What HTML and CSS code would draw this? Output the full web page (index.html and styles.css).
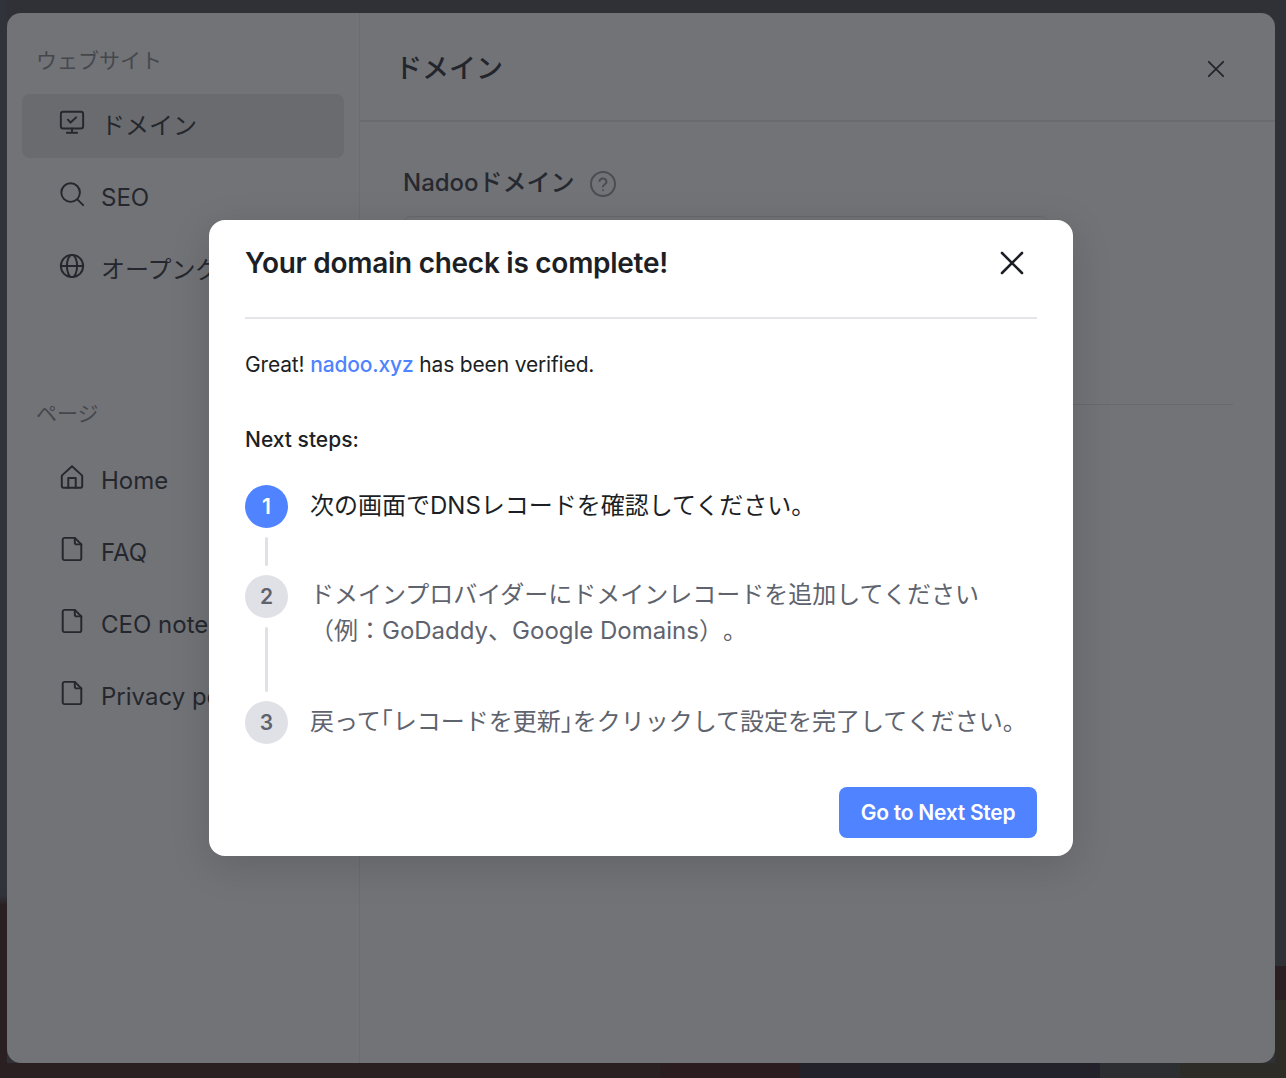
FILE: index.html
```html
<!DOCTYPE html>
<html lang="ja">
<head>
<meta charset="utf-8">
<title>Domain</title>
<link rel="stylesheet" href="styles.css">
</head>
<body>
<div class="stage">
  <div class="panel">
    <aside class="sidebar">
      <div class="group-label">ウェブサイト</div>
      <a class="nav-item active">
        <svg class="nav-icon" viewBox="0 0 28 28" fill="none" stroke="currentColor" stroke-width="2.100" stroke-linecap="round" stroke-linejoin="round"><rect x="2" y="3" width="24" height="18" rx="2.5"/><path d="M9.500 11.500l3 3 6-5.500"/><path d="M14 21v4.500M8.500 25.500h11"/></svg>
        <span>ドメイン</span>
      </a>
      <a class="nav-item">
        <svg class="nav-icon" viewBox="0 0 28 28" fill="none" stroke="currentColor" stroke-width="2.100" stroke-linecap="round" stroke-linejoin="round"><circle cx="12.500" cy="12.500" r="10"/><path d="M20 20l6 6"/></svg>
        <span>SEO</span>
      </a>
      <a class="nav-item">
        <svg class="nav-icon" viewBox="0 0 28 28" fill="none" stroke="currentColor" stroke-width="2.100" stroke-linecap="round" stroke-linejoin="round"><circle cx="14" cy="14" r="12"/><path d="M2 14h24"/><ellipse cx="14" cy="14" rx="5.500" ry="12"/></svg>
        <span>オープングラフ</span>
      </a>
      <div class="group-label second">ページ</div>
      <a class="nav-item">
        <svg class="nav-icon" viewBox="0 0 28 28" fill="none" stroke="currentColor" stroke-width="2.100" stroke-linecap="round" stroke-linejoin="round"><path d="M3 12.500L14 2.500l11 10V24a1.500 1.500 0 0 1-1.500 1.500h-19A1.500 1.500 0 0 1 3 24z"/><path d="M10 25.500V15h8v10.500"/></svg>
        <span>Home</span>
      </a>
      <a class="nav-item">
        <svg class="nav-icon" viewBox="0 0 28 28" fill="none" stroke="currentColor" stroke-width="2.100" stroke-linecap="round" stroke-linejoin="round"><path d="M6 2h11l7 7v15a2 2 0 0 1-2 2H6a2 2 0 0 1-2-2V4a2 2 0 0 1 2-2z"/><path d="M17 2v5a2 2 0 0 0 2 2h5"/></svg>
        <span>FAQ</span>
      </a>
      <a class="nav-item">
        <svg class="nav-icon" viewBox="0 0 28 28" fill="none" stroke="currentColor" stroke-width="2.100" stroke-linecap="round" stroke-linejoin="round"><path d="M6 2h11l7 7v15a2 2 0 0 1-2 2H6a2 2 0 0 1-2-2V4a2 2 0 0 1 2-2z"/><path d="M17 2v5a2 2 0 0 0 2 2h5"/></svg>
        <span>CEO note</span>
      </a>
      <a class="nav-item">
        <svg class="nav-icon" viewBox="0 0 28 28" fill="none" stroke="currentColor" stroke-width="2.100" stroke-linecap="round" stroke-linejoin="round"><path d="M6 2h11l7 7v15a2 2 0 0 1-2 2H6a2 2 0 0 1-2-2V4a2 2 0 0 1 2-2z"/><path d="M17 2v5a2 2 0 0 0 2 2h5"/></svg>
        <span>Privacy policy</span>
      </a>
    </aside>
    <main class="main">
      <header class="main-head">
        <h1 class="main-title">ドメイン</h1>
        <svg class="main-close" viewBox="0 0 20 20" fill="none" stroke="currentColor" stroke-width="2" stroke-linecap="round"><path d="M2 2l16 16M18 2L2 18"/></svg>
      </header>
      <section class="main-body">
        <div class="section-head">
          <h2 class="section-title">Nadooドメイン</h2>
          <svg class="help" viewBox="0 0 26 26" fill="none" stroke="currentColor" stroke-width="2" stroke-linecap="round" stroke-linejoin="round"><circle cx="13" cy="13" r="12"/><path d="M9.500 10a3.600 3.600 0 0 1 7 1c0 2.400-3.500 2.600-3.500 4.500"/><path d="M13 19.200v.1"/></svg>
        </div>
        <div class="field"></div>
        <div class="divider"></div>
      </section>
    </main>
  </div>

  <div class="dialog" role="dialog">
    <header class="dialog-head">
      <h2 class="dialog-title">Your domain check is complete!</h2>
      <svg class="dialog-close" viewBox="0 0 24 24" fill="none" stroke="currentColor" stroke-width="2.600" stroke-linecap="round"><path d="M2 2l20 20M22 2L2 22"/></svg>
    </header>
    <p class="verified">Great! <span class="link">nadoo.xyz</span> has been verified.</p>
    <p class="next">Next steps:</p>
    <ol class="steps">
      <li class="step current">
        <div class="rail"><span class="num">1</span><span class="line"></span></div>
        <div class="step-text">次の画面でDNSレコードを確認してください。</div>
      </li>
      <li class="step middle">
        <div class="rail"><span class="num">2</span><span class="line"></span></div>
        <div class="step-text">ドメインプロバイダーにドメインレコードを追加してください（例：GoDaddy、Google Domains）。</div>
      </li>
      <li class="step last">
        <div class="rail"><span class="num">3</span></div>
        <div class="step-text">戻って｢レコードを更新｣をクリックして設定を完了してください。</div>
      </li>
    </ol>
    <div class="dialog-foot"><button class="primary">Go to Next Step</button></div>
  </div>
</div>
</body>
</html>
```

FILE: styles.css
```css
* { box-sizing: border-box; }
html, body { margin: 0; padding: 0; }
body {
  font-family: Inter, "Noto Sans CJK JP", "Liberation Sans", sans-serif;
  background: #2f3136;
  overflow: hidden;
  text-spacing-trim: space-all;
  text-autospace: no-autospace;
}
.stage {
  position: relative;
  width: 1286px;
  height: 1078px;
  overflow: hidden;
  padding: 13px 11px 15px 7px;
  background:
    linear-gradient(90deg, #2a2022 0 660px, #2b1c20 660px 800px, #23212a 800px 1100px, #2c2e31 1100px 1180px, #2e2c26 1180px) left bottom / 100% 15px no-repeat,
    linear-gradient(#2b1e22 0 34px, #2e2c26 34px) right 966px / 11px 112px no-repeat,
    linear-gradient(#30333a 0 895px, #2a2022 905px) left top / 7px 100% no-repeat,
    #2f3136;
}
.panel {
  height: 1050px;
  display: flex;
  background: #727377;
  border-radius: 14px;
  overflow: hidden;
  color: #22252b;
}
.sidebar {
  width: 353px;
  flex: none;
  padding: 35px 15px 0;
  border-right: 1px solid #6b6c70;
}
.group-label {
  font-size: 21px;
  line-height: 26px;
  color: #45474d;
  padding-left: 14px;
  margin-bottom: 20px;
}
.group-label.second { margin-top: 99px; margin-bottom: 22px; }
.nav-item {
  display: flex;
  align-items: center;
  gap: 16px;
  height: 64px;
  margin-bottom: 8px;
  padding-left: 37px;
  border-radius: 8px;
  font-size: 24px;
  line-height: 32px;
  white-space: nowrap;
  color: #24272d;
}
.nav-item.active { background: #6a6b6f; }
.nav-icon { width: 26px; height: 26px; flex: none; margin-top: -8px; }
.main { flex: 1; min-width: 0; }
.main-head {
  height: 109px;
  display: flex;
  align-items: center;
  justify-content: space-between;
  padding: 4px 50px 0 35px;
  border-bottom: 2px solid #6a6b6f;
}
.main-title { margin: 0; font-size: 27px; line-height: 36px; font-weight: 500; color: #22252b; }
.main-close { width: 18px; height: 18px; color: #22252b; }
.main-body { padding: 43px 42px 0 43px; }
.section-head { display: flex; align-items: center; gap: 15px; height: 36px; }
.section-title { margin: 0; font-size: 24px; line-height: 36px; font-weight: 500; color: #26292f; }
.help { width: 26px; height: 26px; color: #4b4d53; margin-top: 2px; }
.field { width: 646px; height: 52px; margin-top: 15px; border: 1px solid #68696d; border-radius: 8px; background: #727377; }
.divider { height: 1px; margin-top: 136px; background: #68696d; }
.dialog {
  position: absolute;
  left: 209px;
  top: 220px;
  width: 864px;
  height: 636px;
  padding: 0 36px;
  background: #fff;
  border-radius: 16px;
  box-shadow: 0 10px 40px rgba(0, 0, 0, .14);
  color: #1c1f25;
}
.dialog-head {
  height: 99px;
  display: flex;
  justify-content: space-between;
  align-items: flex-start;
  border-bottom: 2px solid #e4e5e9;
  padding-top: 23px;
}
.dialog-title { margin: 0; font-size: 28px; line-height: 40px; font-weight: 600; letter-spacing: -.27px; }
.dialog-close { width: 24px; height: 24px; margin: 8px 13px 0 0; color: #1c1f25; }
.verified { margin: 32px 0 0; font-size: 21px; line-height: 28px; letter-spacing: -.16px; }
.link { color: #4f83ff; font-weight: 500; }
.next { margin: 47px 0 0; font-size: 21px; line-height: 28px; font-weight: 500; }
.steps { list-style: none; margin: 31px 0 0; padding: 0; }
.step { display: flex; gap: 22px; }
.rail { width: 43px; flex: none; display: flex; flex-direction: column; align-items: center; }
.num {
  width: 43px;
  height: 43px;
  flex: none;
  border-radius: 50%;
  display: flex;
  align-items: center;
  justify-content: center;
  background: #e0e1e6;
  color: #5e636e;
  font-size: 21px;
  font-weight: 600;
}
.current .num { background: #4f83ff; color: #fff; }
.line { flex: 1; width: 3px; margin: 9px 0; background: #e0e1e6; border-radius: 2px; }
.step-text {
  width: 720px;
  font-size: 24px;
  line-height: 36px;
  color: #5e636e;
  margin-top: 3px;
  padding-bottom: 51px;
}
.current .step-text { color: #1c1f25; }
.middle .step-text { margin-top: 2px; padding-bottom: 52px; }
.last .step-text { padding-bottom: 0; }
.dialog-foot { display: flex; justify-content: flex-end; margin-top: 43px; }
.primary {
  width: 198px;
  height: 51px;
  border: 0;
  border-radius: 8px;
  background: #4f83ff;
  color: #fff;
  font: 600 21px/28px Inter, "Noto Sans CJK JP", sans-serif;
  letter-spacing: -.25px;
}
```
